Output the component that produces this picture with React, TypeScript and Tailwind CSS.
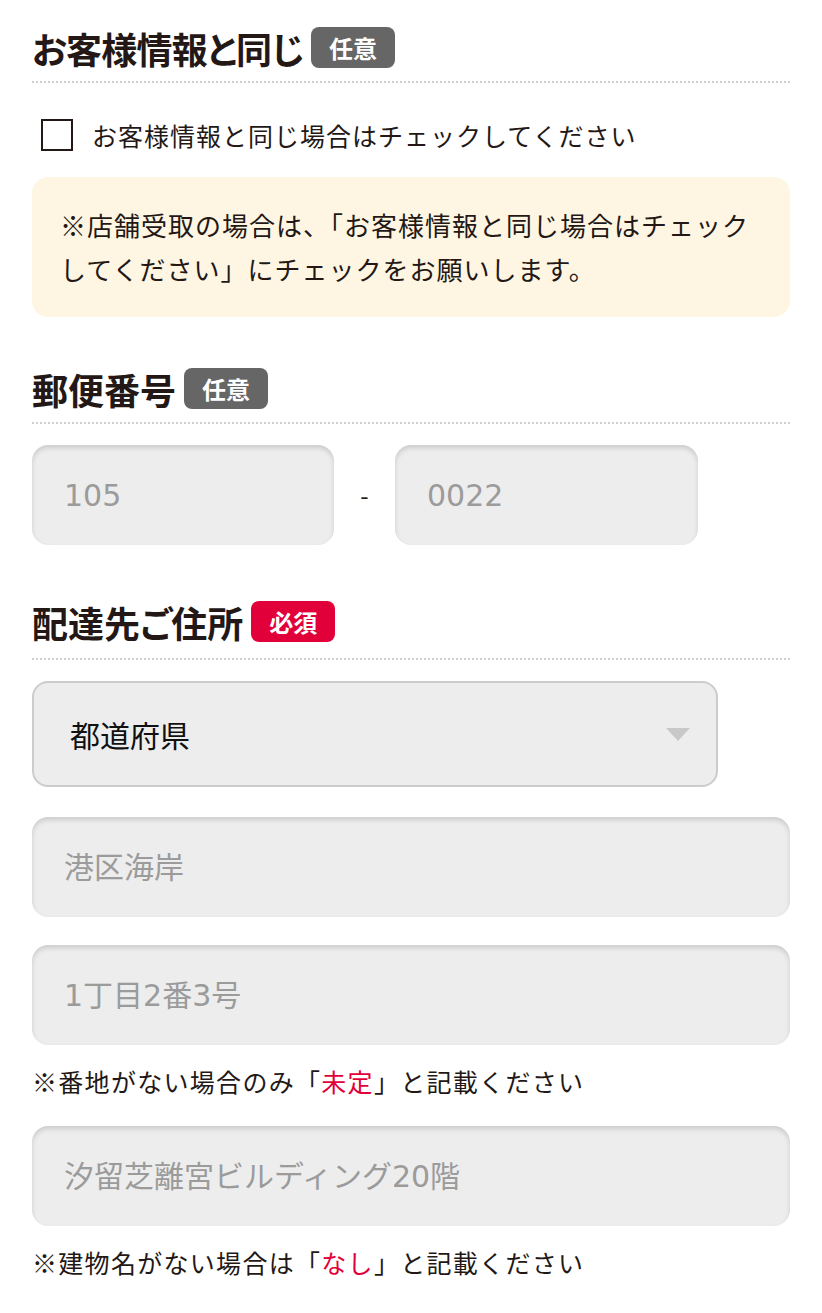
import React from "react";

const FONT = { fontFamily: '"Noto Sans CJK JP", "Noto Sans", sans-serif' };
const INPUT_FONT = { fontFamily: '"DejaVu Sans", "Noto Sans CJK JP", sans-serif' };

function Badge({ children, red }: { children: React.ReactNode; red?: boolean }) {
  return (
    <span
      className={`inline-flex h-[41px] items-center justify-center rounded-[8px] px-[18px] text-[24px] font-bold leading-none text-white ${
        red ? "bg-[#e2003a]" : "bg-[#666666]"
      }`}
    >
      {children}
    </span>
  );
}

function SectionHeader({
  title,
  badge,
  red,
  className,
  titleClass,
}: {
  title: string;
  badge: string;
  red?: boolean;
  className?: string;
  titleClass?: string;
}) {
  return (
    <div className={`border-b-2 border-dotted border-[#cfcfcf] ${className ?? ""}`}>
      <div className="flex h-[41px] items-center gap-[8px]">
        <h2
          className={`text-[36px] font-bold leading-none text-[#231815] [font-feature-settings:'palt'] ${titleClass ?? ""}`}
        >
          {title}
        </h2>
        <Badge red={red}>{badge}</Badge>
      </div>
    </div>
  );
}

function TextInput({ placeholder, className }: { placeholder: string; className?: string }) {
  return (
    <input
      type="text"
      placeholder={placeholder}
      className={`block h-[100px] rounded-[16px] bg-[#ededed] pl-[32px] text-[30px] text-[#231815] shadow-[inset_0_3px_5px_rgba(0,0,0,0.14)] outline-none placeholder:text-[#9b9b9b] ${className ?? ""}`}
      style={INPUT_FONT}
    />
  );
}

export default function App() {
  return (
    <div className="min-h-[1313px] bg-white px-[32px] pt-[27px] text-[#231815]" style={FONT}>
      <SectionHeader
        title="お客様情報と同じ"
        badge="任意"
        className="pb-[13px]"
        titleClass="tracking-[-0.8px]"
      />

      <label className="mt-[36px] flex items-center">
        <span className="ml-[9px] block h-[32px] w-[32px] border-2 border-[#231815] bg-white" />
        <span className="ml-[19px] text-[25px] leading-none tracking-[1px]">
          お客様情報と同じ場合はチェックしてください
        </span>
      </label>

      <div className="mt-[26px] rounded-[16px] bg-[#fef6e3] px-[28px] py-[26px] text-[26px] leading-[44px] tracking-[1px]">
        ※店舗受取の場合は、「お客様情報と同じ場合はチェック
        <br />
        してください」にチェックをお願いします。
      </div>

      <SectionHeader title="郵便番号" badge="任意" className="mt-[51px] pb-[13px]" />

      <div className="mt-[21px] flex items-center">
        <TextInput placeholder="105" className="w-[302px]" />
        <span className="w-[61px] text-center text-[24px]">-</span>
        <TextInput placeholder="0022" className="w-[303px]" />
      </div>

      <SectionHeader title="配達先ご住所" badge="必須" red className="mt-[56px] pb-[16px]" />

      <div className="mt-[21px] flex h-[106px] w-[686px] items-center justify-between rounded-[16px] border-2 border-[#cccccc] bg-[#ededed] pl-[36px] pr-[26px]">
        <span className="text-[30px] leading-none text-[#111]">都道府県</span>
        <svg width="24" height="13" viewBox="0 0 24 13" aria-hidden="true">
          <polygon points="0,0 24,0 12,13" fill="#c8c8c8" />
        </svg>
      </div>

      <TextInput placeholder="港区海岸" className="mt-[30px] w-full" />
      <TextInput placeholder="1丁目2番3号" className="mt-[28px] w-full" />

      <p className="mt-[18px] text-[25px] leading-[36px] tracking-[1.3px]">
        ※番地がない場合のみ「<span className="text-[#e2003a]">未定</span>」と記載ください
      </p>

      <TextInput placeholder="汐留芝離宮ビルディング20階" className="mt-[27px] w-full" />

      <p className="mt-[18px] text-[25px] leading-[36px] tracking-[1.3px]">
        ※建物名がない場合は「<span className="text-[#e2003a]">なし</span>」と記載ください
      </p>
    </div>
  );
}
